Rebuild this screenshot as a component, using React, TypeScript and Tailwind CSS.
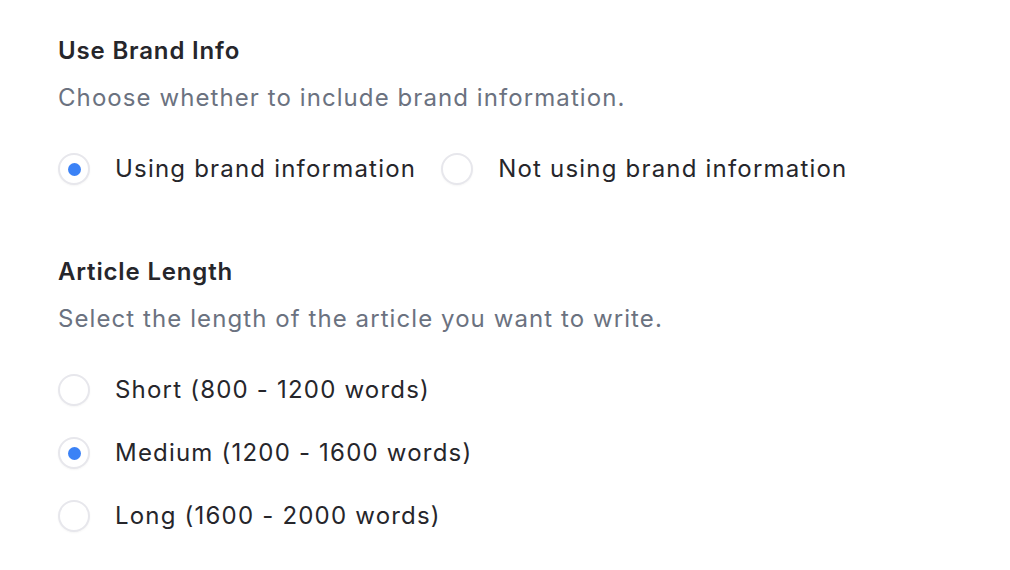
import { useState } from "react";

type Option = { value: string; label: string };

function Radio({ checked, label, onSelect }: { checked: boolean; label: string; onSelect: () => void }) {
  return (
    <label className="flex items-center gap-[25px] cursor-pointer" onClick={onSelect}>
      <span className="flex h-8 w-8 shrink-0 items-center justify-center rounded-full border-2 border-[#e7e7ec] bg-white shadow-[0_1px_2px_rgba(0,0,0,0.04)]">
        {checked && <span className="h-[13px] w-[13px] rounded-full bg-[#3b82f6]" />}
      </span>
      <span className="text-[24px] leading-8 tracking-[0.05em] text-[#26262b]">{label}</span>
    </label>
  );
}

function Section({
  title,
  desc,
  options,
  value,
  onChange,
  row,
}: {
  title: string;
  desc: string;
  options: Option[];
  value: string;
  onChange: (v: string) => void;
  row?: boolean;
}) {
  return (
    <section className="flex flex-col">
      <h3 className="text-[24px] leading-8 font-semibold tracking-[0.035em] text-[#26262b]">{title}</h3>
      <p className="mt-[15px] text-[24px] leading-8 tracking-[0.045em] text-[#6b7280]">{desc}</p>
      <div className={row ? "mt-[39px] flex items-center gap-[25px]" : "mt-[39px] flex flex-col gap-[31px]"}>
        {options.map((o) => (
          <Radio key={o.value} checked={value === o.value} label={o.label} onSelect={() => onChange(o.value)} />
        ))}
      </div>
    </section>
  );
}

export default function App() {
  const [brand, setBrand] = useState("using");
  const [length, setLength] = useState("medium");

  return (
    <div className="min-h-screen bg-white pl-[58px] pt-[35px] font-['Inter',sans-serif]">
      <div className="flex flex-col gap-[71px]">
        <Section
          title="Use Brand Info"
          desc="Choose whether to include brand information."
          options={[
            { value: "using", label: "Using brand information" },
            { value: "not", label: "Not using brand information" },
          ]}
          value={brand}
          onChange={setBrand}
          row
        />
        <Section
          title="Article Length"
          desc="Select the length of the article you want to write."
          options={[
            { value: "short", label: "Short (800 - 1200 words)" },
            { value: "medium", label: "Medium (1200 - 1600 words)" },
            { value: "long", label: "Long (1600 - 2000 words)" },
          ]}
          value={length}
          onChange={setLength}
        />
      </div>
    </div>
  );
}
